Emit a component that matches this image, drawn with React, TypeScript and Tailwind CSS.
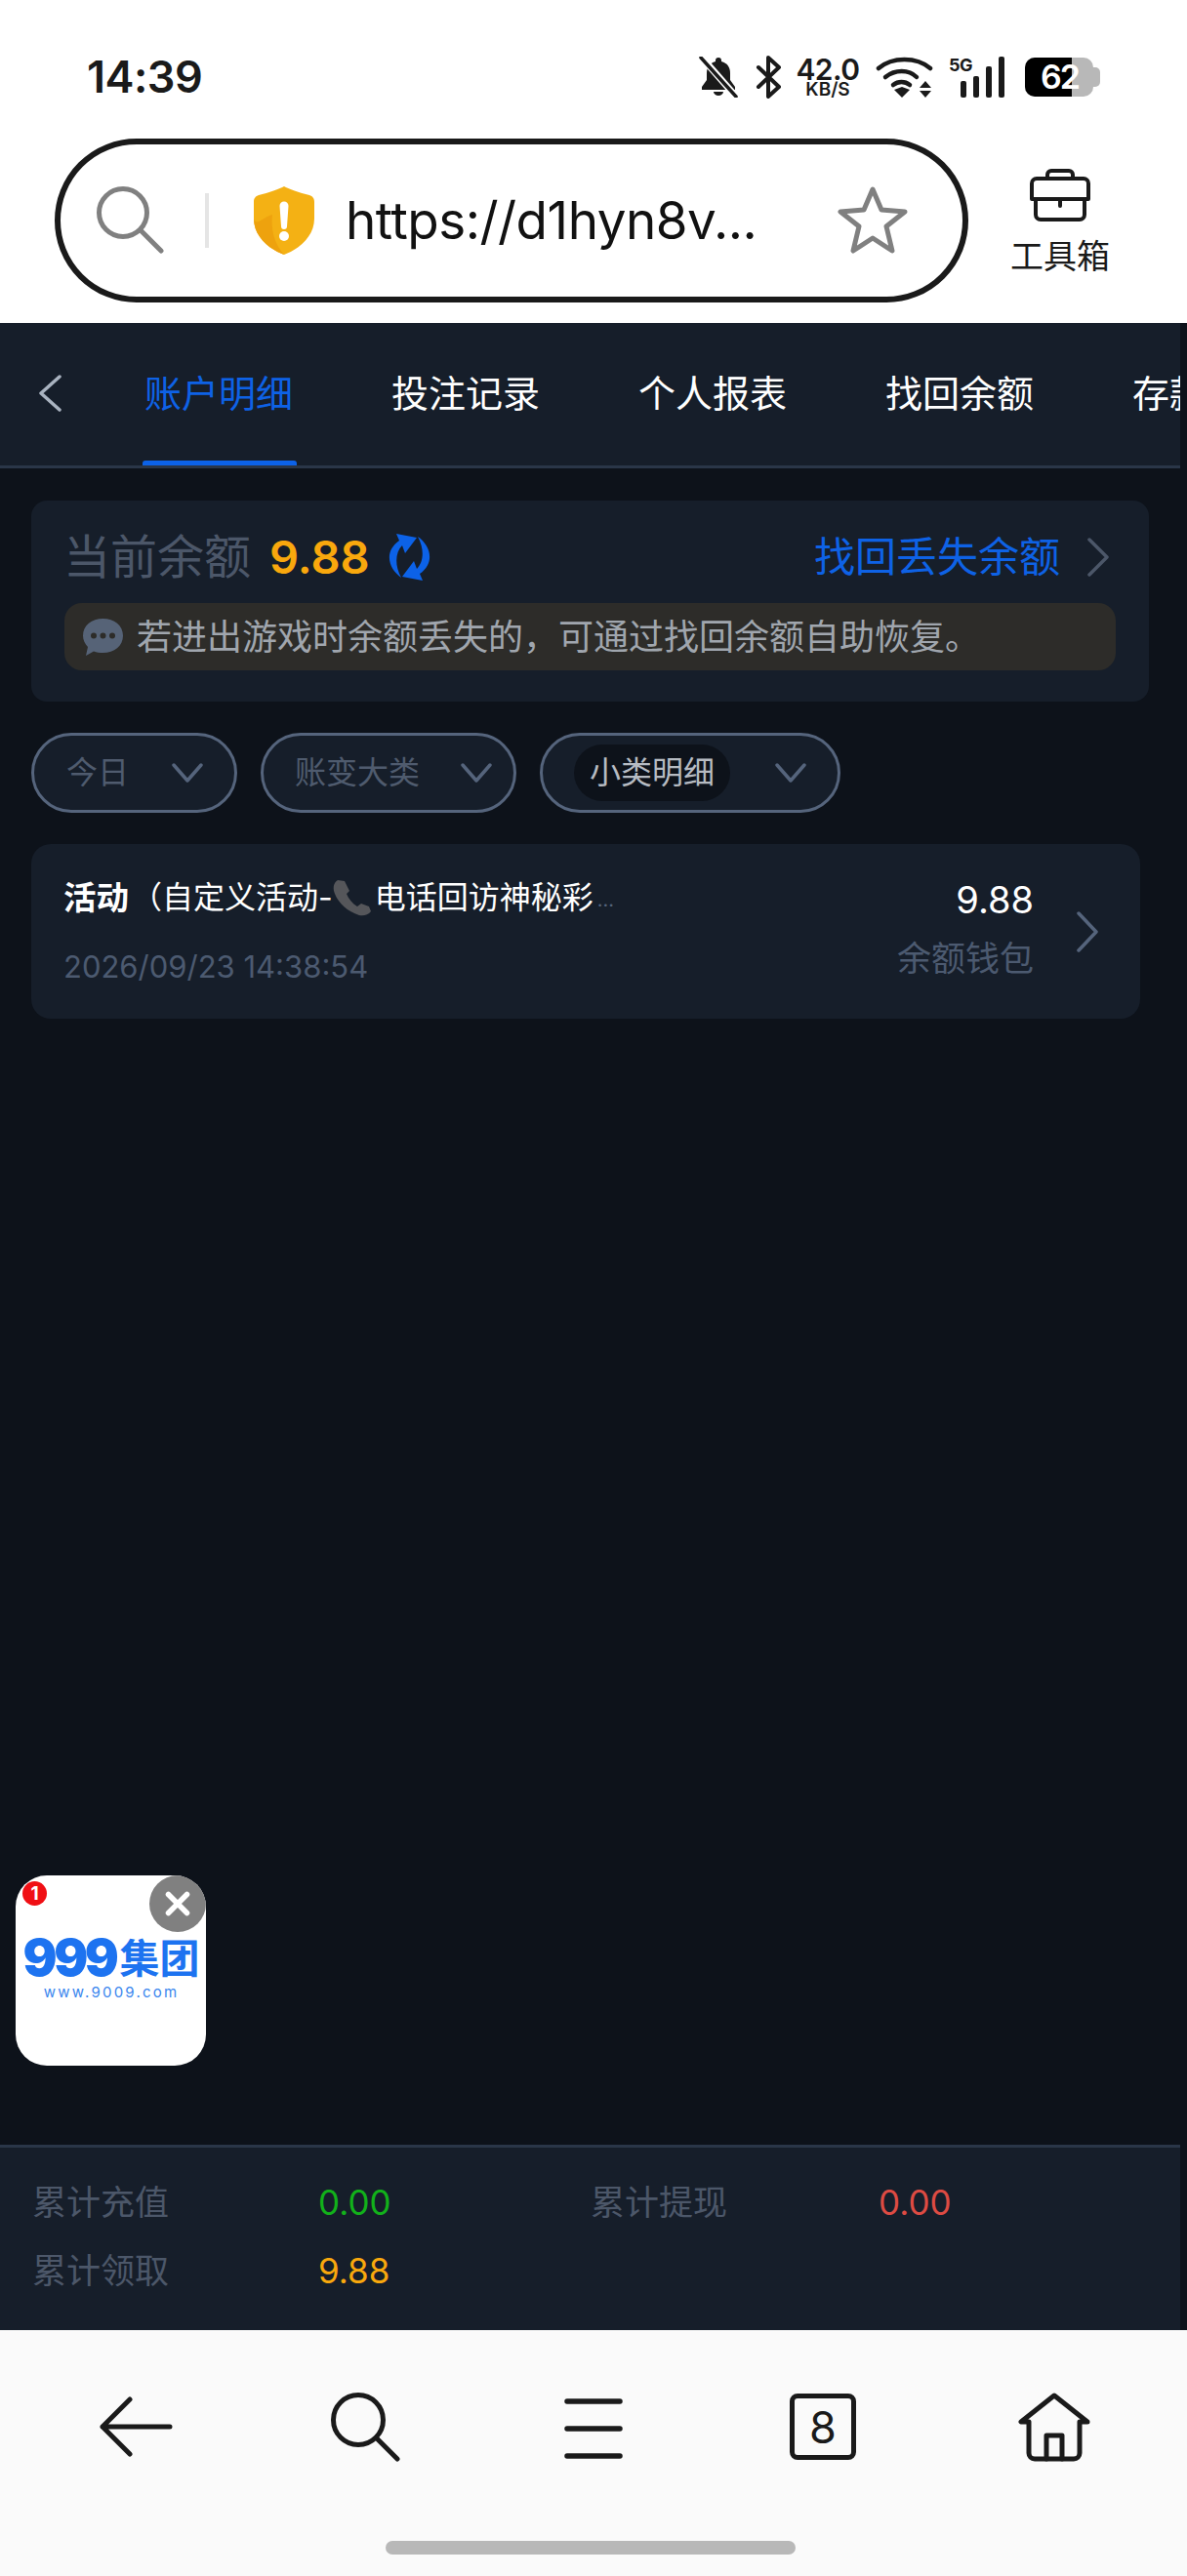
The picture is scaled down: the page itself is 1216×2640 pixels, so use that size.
import { X } from 'lucide-react';

const SANS = 'font-["Inter","Noto_Sans_CJK_SC",sans-serif]';

const tabs = ['账户明细', '投注记录', '个人报表', '找回余额', '存款'];

function Chevron({ color, width, height }: { color: string; width: number; height: number }) {
  return (
    <svg className="shrink-0" width={width} height={height} viewBox={`0 0 ${width} ${height}`} fill="none" stroke={color} strokeWidth="3.500" strokeLinecap="round" strokeLinejoin="round">
      <path d={`M3 2 L${width - 3} ${height / 2} L3 ${height - 2}`} />
    </svg>
  );
}

function StatusBar() {
  return (
    <div className="h-[142px] shrink-0 flex items-start justify-between pl-[89px] pr-[89px] pt-[54px]">
      <span className="text-[45px] leading-[50px] font-semibold text-[#1a1a1a] tracking-[-0.5px]">14:39</span>
      <div className="flex items-center h-[42px] mt-[4px]">
        <svg width="40" height="42" viewBox="0 0 40 42" fill="#1a1a1a">
          <path d="M20 1a3 3 0 0 1 3 3v1c6 1.500 9 6 9 12v7l5 7v3H3v-3l5-7v-7c0-6 3-10.500 9-12V4a3 3 0 0 1 3-3zM15 36h10a5 4 0 0 1-10 0z" />
          <path d="M3 1 L38 41" stroke="#ffffff" strokeWidth="7" />
          <path d="M2 1 L38 41" stroke="#1a1a1a" strokeWidth="3.500" strokeLinecap="round" />
        </svg>
        <svg className="ml-[18px]" width="27" height="44" viewBox="0 0 27 44" fill="none" stroke="#1a1a1a" strokeWidth="4" strokeLinejoin="round" strokeLinecap="round">
          <path d="M3 12 L24 32 L13 42 V2 L24 12 L3 32" />
        </svg>
        <div className="ml-[14px] w-[66px] flex flex-col items-center text-[#1a1a1a] font-semibold">
          <span className="text-[30px] leading-[26px] tracking-[-0.5px]">42.0</span>
          <span className="text-[19px] leading-[16px]">KB/S</span>
        </div>
        <svg className="ml-[16px]" width="59" height="42" viewBox="0 0 59 42" fill="none" stroke="#1a1a1a" strokeWidth="4.500" strokeLinecap="round">
          <path d="M3 12c14-12 39-12 53 0" />
          <path d="M10 21c10-8 24-8 32 0" />
          <path d="M18 29c5-4 12-4 17 0" />
          <path d="M19 34l8-3 8 3-8 8z" fill="#1a1a1a" stroke="none" />
          <path d="M51 25l6 7H45zM51 42l6-7H45z" fill="#1a1a1a" stroke="none" />
        </svg>
        <div className="ml-[16px] relative w-[57px] h-[42px]">
          <span className="absolute left-0 top-0 text-[18px] leading-[18px] font-bold text-[#1a1a1a] tracking-[-0.5px]">5G</span>
          <div className="absolute left-[12px] bottom-0 flex items-end gap-[7px]">
            <div className="w-[6px] h-[17px] rounded-[2px] bg-[#1a1a1a]" />
            <div className="w-[6px] h-[22px] rounded-[2px] bg-[#1a1a1a]" />
            <div className="w-[6px] h-[32px] rounded-[2px] bg-[#1a1a1a]" />
            <div className="w-[6px] h-[42px] rounded-[2px] bg-[#1a1a1a]" />
          </div>
        </div>
        <div className="ml-[21px] relative flex items-center w-[77px] h-[40px]">
          <div className="relative w-[70px] h-[40px] rounded-[10px] overflow-hidden bg-[#b8b8b8]">
            <div className="w-[48px] h-full bg-black" />
          </div>
          <div className="w-[7px] h-[20px] rounded-r-[5px] bg-[#b8b8b8]" />
          <span className="absolute left-[16px] top-0 text-[34px] leading-[40px] tracking-[-2px] font-semibold text-white">62</span>
        </div>
      </div>
    </div>
  );
}

function UrlBar() {
  return (
    <div className="flex-1 flex items-start pl-[56px]">
      <div className="w-[936px] h-[168px] rounded-[84px] border-[6px] border-[#1a1a1a] flex items-center bg-white">
        <svg className="ml-[37px] shrink-0" width="70" height="70" viewBox="0 0 70 70" fill="none" stroke="#808080" strokeWidth="5" strokeLinecap="round">
          <circle cx="27" cy="27" r="24.500" />
          <path d="M45 45 L66 66" />
        </svg>
        <div className="ml-[41px] w-[4px] h-[56px] shrink-0 bg-[#e5e5e5]" />
        <svg className="ml-[45px] shrink-0" width="64" height="72" viewBox="0 0 64 72">
          <path d="M32 1 C36 3 48 8 58 10 C61 11 63 13 63 17 V34 C63 52 48 65 32 71 C16 65 1 52 1 34 V17 C1 13 3 11 6 10 C16 8 28 3 32 1 Z" fill="#f4b114" />
          <path d="M32 71 C16 65 1 52 1 34 C4 42 8 34 20 30 C18 48 24 62 32 71 Z" fill="#eea20e" />
          <path d="M27.500 21 a4.500 4.500 0 0 1 9 0 L35 42 a3 3 0 0 1-6 0 Z" fill="#ffffff" />
          <circle cx="32" cy="52" r="5" fill="#ffffff" />
        </svg>
        <span className="ml-[31px] text-[53px] leading-[70px] text-[#111] tracking-[-0.5px] w-[504px] shrink-0 whitespace-nowrap">https://d1hyn8v...</span>
        <svg className="shrink-0" width="72" height="70" viewBox="0 0 72 70" fill="none" stroke="#808080" strokeWidth="5" strokeLinejoin="round">
          <path d="M36 3 L45 24 L69 26 L50 41 L56 66 L36 53 L16 66 L22 41 L3 26 L27 24 Z" />
        </svg>
      </div>
      <div className="ml-[44px] pt-[31px] flex flex-col items-center w-[100px]">
        <svg width="62" height="54" viewBox="0 0 62 54" fill="none" stroke="#1a1a1a" strokeWidth="4" strokeLinejoin="round" strokeLinecap="round">
          <path d="M18 10 V6 a4 4 0 0 1 4-4 h18 a4 4 0 0 1 4 4 v4" />
          <path d="M2 15 a5 5 0 0 1 5-5 h48 a5 5 0 0 1 5 5 v16 H2 Z" />
          <path d="M6 31 V47 a5 5 0 0 0 5 5 h40 a5 5 0 0 0 5-5 V31" />
          <path d="M31 31 v7" />
        </svg>
        <span className="mt-[17px] text-[34px] leading-[38px] text-[#1a1a1a] whitespace-nowrap">工具箱</span>
      </div>
    </div>
  );
}

function TabBar() {
  return (
    <div className="h-[149px] shrink-0 w-[1209px] bg-[#161e2a] border-b-[3px] border-[#2a3648] flex items-stretch overflow-hidden">
      <div className="w-[146px] shrink-0 flex items-center pl-[39px] pb-[2px]">
        <svg width="25" height="38" viewBox="0 0 25 38" fill="none" stroke="#a9b3c0" strokeWidth="3.500" strokeLinecap="round" strokeLinejoin="round">
          <path d="M22 2 L3 19 L22 36" />
        </svg>
      </div>
      <div className="flex gap-[95px]">
        {tabs.map((t, i) => (
          <div
            key={t}
            className={`relative pt-[46px] pl-[2px] text-[38px] leading-[52px] w-[158px] shrink-0 whitespace-nowrap ${i === 0 ? 'text-[#0e62e6]' : 'text-white'}`}
          >
            {t}
            {i === 0 && <div className="absolute left-0 right-0 bottom-0 h-[5px] rounded-t-[3px] bg-[#0c62e8]" />}
          </div>
        ))}
      </div>
    </div>
  );
}

function BalanceCard() {
  return (
    <div className="ml-[32px] mt-[33px] w-[1145px] h-[206px] rounded-[16px] bg-[#161e2a] pt-[26px] px-[34px]">
      <div className="flex items-center h-[64px]">
        <span className="-ml-[1px] text-[48px] leading-[60px] text-[#4c5769]">当前余额</span>
        <span className="ml-[19px] text-[47px] leading-[60px] font-semibold text-[#f9a80d]">9.88</span>
        <svg className="ml-[17px] shrink-0" width="47" height="50" viewBox="0 0 47 50" fill="#0c62e8">
          <path d="M10 1 L31 5 L19 21 L16 13 C9 20 8 33 15 46 C3 38 -4 20 13 8 Z" />
          <path d="M10 1 L31 5 L19 21 L16 13 C9 20 8 33 15 46 C3 38 -4 20 13 8 Z" transform="rotate(180 23.500 25)" />
        </svg>
        <span className="ml-auto text-[42px] leading-[60px] text-[#0e62e6]">找回丢失余额</span>
        <div className="ml-[27px] mr-[6px] w-[24px]">
          <Chevron color="#4c5769" width={24} height={40} />
        </div>
      </div>
      <div className="mt-[15px] h-[69px] rounded-[18px] bg-[#2d2c29] flex items-center pl-[18px]">
        <svg className="shrink-0" width="43" height="40" viewBox="0 0 43 40" fill="#566377">
          <path d="M21.500 1 C33 1 42 8 42 18.500 C42 29 33 36 21.500 36 C18 36 15 35.500 12 34.500 L4 39 L6 30 C3 27 1 23 1 18.500 C1 8 10 1 21.500 1 Z" />
          <circle cx="12" cy="18.500" r="3" fill="#2d2c29" />
          <circle cx="21.500" cy="18.500" r="3" fill="#2d2c29" />
          <circle cx="31" cy="18.500" r="3" fill="#2d2c29" />
        </svg>
        <span className="ml-[13px] text-[36px] leading-[48px] text-[#a0a6ae] whitespace-nowrap">若进出游戏时余额丢失的，可通过找回余额自助恢复。</span>
      </div>
    </div>
  );
}

function FilterPill({ label, width, pad, active }: { label: string; width: string; pad: string; active?: boolean }) {
  return (
    <div className={`${width} ${pad} h-[82px] rounded-[41px] border-[3px] border-[#55647c] bg-[#161e2a] flex items-center justify-between`}>
      {active ? (
        <span className="-ml-[1px] h-[58px] px-[16px] rounded-[29px] bg-[#0d121a] text-[32px] leading-[58px] text-[#b6bbc2] whitespace-nowrap">{label}</span>
      ) : (
        <span className="text-[32px] leading-[58px] text-[#4f5b6e] whitespace-nowrap">{label}</span>
      )}
      <svg className="shrink-0" width="32" height="20" viewBox="0 0 32 20" fill="none" stroke="#55647c" strokeWidth="3.500" strokeLinecap="round" strokeLinejoin="round">
        <path d="M2 2 L16 18 L30 2" />
      </svg>
    </div>
  );
}

function RecordRow() {
  return (
    <div className="ml-[32px] mt-[32px] w-[1136px] h-[179px] rounded-[20px] bg-[#161e2a] flex items-center pl-[33px] pr-[42px]">
      <div className="flex-1 min-w-0 flex flex-col pb-[2px]">
        <div className="h-[50px] flex items-center whitespace-nowrap text-white">
          <span className="text-[33.500px] leading-[44px] font-bold">活动</span>
          <span className="ml-[2px] text-[32px] leading-[44px]">（自定义活动-</span>
          <svg className="shrink-0" width="40" height="38" viewBox="0 0 40 38" fill="#55565a">
            <path d="M5 1 C0 4 0 10 2 15 C6 25 15 33 27 37 C31 38 36 37 39 33 L37 28 L29 25 L25 28 C20 25 16 20 14 15 L17 12 L12 2 Z" />
          </svg>
          <span className="ml-[3px] text-[32px] leading-[44px]">电话回访神秘彩</span>
          <span className="ml-[4px] text-[20px] leading-[44px] pt-[4px] text-[#55647c]">...</span>
        </div>
        <span className="mt-[25px] text-[31px] leading-[42px] text-[#4c5a70]">2026/09/23 14:38:54</span>
      </div>
      <div className="flex flex-col items-end gap-[12px] pb-[8px]">
        <span className="text-[38px] leading-[50px] text-white">9.88</span>
        <span className="text-[35px] leading-[46px] text-[#4c5a70]">余额钱包</span>
      </div>
      <div className="ml-[43px]">
        <Chevron color="#55647c" width={24} height={42} />
      </div>
    </div>
  );
}

function FloatingAd() {
  return (
    <div className="absolute left-[16px] top-[1922px] w-[195px] h-[195px] rounded-[32px] bg-white overflow-hidden">
      <div className="absolute left-[7px] top-[6px] w-[25px] h-[25px] rounded-full bg-[#f00f14] text-white text-[19px] leading-[25px] text-center font-bold">1</div>
      <div className="absolute right-0 top-0 w-[58px] h-[58px] rounded-full bg-[#808080] flex items-center justify-center">
        <X className="text-white" size={38} strokeWidth={3.500} />
      </div>
      <div className="absolute left-[9px] top-[63px] w-[178px] flex flex-col items-center text-[#1d73f0] whitespace-nowrap">
        <div className="flex items-center h-[44px] whitespace-nowrap">
          <span className="text-[52px] leading-[44px] font-black tracking-[-3.500px]">999</span>
          <span className="ml-[4px] text-[41px] leading-[44px] font-bold">集团</span>
        </div>
        <span className="text-[15px] leading-[18px] mt-[4px] tracking-[2.200px] text-[#3a86ee]">www.9009.com</span>
      </div>
    </div>
  );
}

function TotalsFooter() {
  return (
    <div className="h-[190px] shrink-0 w-[1209px] bg-[#161e2a] border-t-[3px] border-[#2a3648] grid grid-cols-[293px_279px_295px_1fr] grid-rows-[70px_70px] pl-[33px] pt-[21px] text-[35px] leading-[70px]">
      <span className="text-[#4c5769]">累计充值</span>
      <span className="text-[#12b11a]">0.00</span>
      <span className="text-[#4c5769]">累计提现</span>
      <span className="text-[#dd4b43]">0.00</span>
      <span className="text-[#4c5769]">累计领取</span>
      <span className="text-[#f9a80d]">9.88</span>
    </div>
  );
}

function BottomNav() {
  return (
    <div className="h-[252px] shrink-0 bg-[#fafafa] flex flex-col">
      <div className="h-[198px] flex items-center pl-[102px]">
        <svg width="75" height="62" viewBox="0 0 75 62" fill="none" stroke="#1a1a1a" strokeWidth="5" strokeLinecap="round" strokeLinejoin="round">
          <path d="M31 3 L3 31 L31 59 M3 31 H72" />
        </svg>
        <svg className="ml-[162px]" width="71" height="71" viewBox="0 0 71 71" fill="none" stroke="#1a1a1a" strokeWidth="5" strokeLinecap="round">
          <circle cx="28" cy="28" r="25.500" />
          <path d="M47 47 L68 68" />
        </svg>
        <svg className="ml-[168px]" width="60" height="68" viewBox="0 0 60 68" fill="none" stroke="#1a1a1a" strokeWidth="5.500" strokeLinecap="round">
          <path d="M3 8 H57 M3 36 H57 M3 64 H57" />
        </svg>
        <div className="ml-[171px] w-[68px] h-[68px] rounded-[8px] border-[5px] border-[#1a1a1a] flex items-center justify-center text-[45px] leading-none text-[#1a1a1a]">8</div>
        <svg className="ml-[166px]" width="74" height="71" viewBox="0 0 74 71" fill="none" stroke="#1a1a1a" strokeWidth="5" strokeLinejoin="round" strokeLinecap="round">
          <path d="M37 3 L3 30 H11 V62 a6 6 0 0 0 6 6 H57 a6 6 0 0 0 6-6 V30 H71 Z" />
          <path d="M29 68 V44 H45 V68" />
        </svg>
      </div>
      <div className="ml-[395px] mt-[18px] w-[420px] h-[14px] rounded-[7px] bg-[#b8b8b8]" />
    </div>
  );
}

export default function App() {
  return (
    <div className={`relative w-[1216px] h-[2640px] overflow-hidden bg-white flex flex-col ${SANS}`}>
      <div className="h-[331px] shrink-0 bg-white flex flex-col">
        <StatusBar />
        <UrlBar />
      </div>
      <div className="flex-1 min-h-0 bg-[#0d121a] flex flex-col">
        <TabBar />
        <div className="flex-1 min-h-0 flex flex-col">
          <BalanceCard />
          <div className="ml-[32px] mt-[32px] flex gap-[24px]">
            <FilterPill label="今日" width="w-[211px]" pad="pl-[33px] pr-[32px]" />
            <FilterPill label="账变大类" width="w-[262px]" pad="pl-[32px] pr-[22px]" />
            <FilterPill label="小类明细" width="w-[308px]" pad="pl-[33px] pr-[32px]" active />
          </div>
          <RecordRow />
        </div>
        <TotalsFooter />
      </div>
      <BottomNav />
      <FloatingAd />
    </div>
  );
}
